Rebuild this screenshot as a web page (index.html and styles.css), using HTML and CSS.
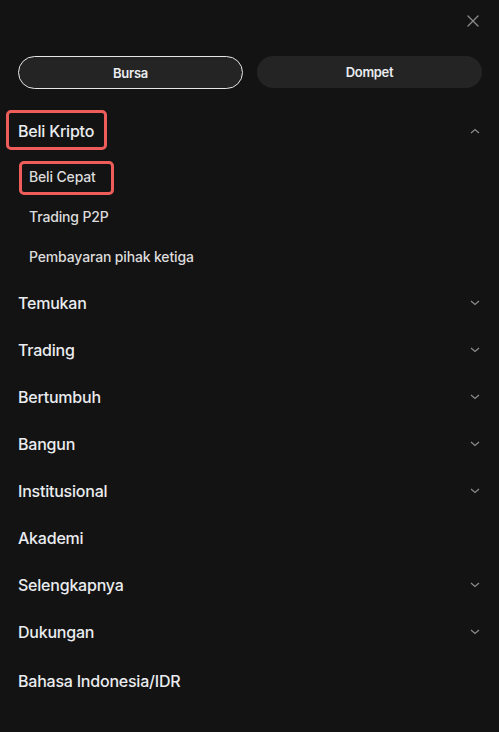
FILE: index.html
```html
<!DOCTYPE html>
<html lang="id">
<head>
<meta charset="utf-8">
<title>Menu</title>
<link rel="stylesheet" href="styles.css">
</head>
<body>
<div class="drawer">
  <div class="top">
    <button class="close" aria-label="Tutup">
      <svg width="16" height="16" viewBox="0 0 16 16"><path d="M3 3L13 13M13 3L3 13" stroke="#8c8c8c" stroke-width="1.3" fill="none" stroke-linecap="round"/></svg>
    </button>
  </div>
  <div class="tabs">
    <div class="tab tab-active">Bursa</div>
    <div class="tab">Dompet</div>
  </div>
  <nav class="menu">
    <div class="item">
      <span class="label mark mark-main">Beli Kripto</span>
      <svg class="chev" width="10" height="6" viewBox="0 0 10 6"><path d="M1 5L5 1.5L9 5" stroke="#8c8c8c" stroke-width="1.2" fill="none"/></svg>
    </div>
    <div class="submenu">
      <div class="subitem"><span class="label mark mark-sub">Beli Cepat</span></div>
      <div class="subitem"><span class="label">Trading P2P</span></div>
      <div class="subitem"><span class="label">Pembayaran pihak ketiga</span></div>
    </div>
    <div class="item"><span class="label">Temukan</span><svg class="chev" width="10" height="6" viewBox="0 0 10 6"><path d="M1 1L5 4.5L9 1" stroke="#8c8c8c" stroke-width="1.2" fill="none"/></svg></div>
    <div class="item"><span class="label">Trading</span><svg class="chev" width="10" height="6" viewBox="0 0 10 6"><path d="M1 1L5 4.5L9 1" stroke="#8c8c8c" stroke-width="1.2" fill="none"/></svg></div>
    <div class="item"><span class="label">Bertumbuh</span><svg class="chev" width="10" height="6" viewBox="0 0 10 6"><path d="M1 1L5 4.5L9 1" stroke="#8c8c8c" stroke-width="1.2" fill="none"/></svg></div>
    <div class="item"><span class="label">Bangun</span><svg class="chev" width="10" height="6" viewBox="0 0 10 6"><path d="M1 1L5 4.5L9 1" stroke="#8c8c8c" stroke-width="1.2" fill="none"/></svg></div>
    <div class="item"><span class="label">Institusional</span><svg class="chev" width="10" height="6" viewBox="0 0 10 6"><path d="M1 1L5 4.5L9 1" stroke="#8c8c8c" stroke-width="1.2" fill="none"/></svg></div>
    <div class="item"><span class="label">Akademi</span></div>
    <div class="item"><span class="label">Selengkapnya</span><svg class="chev" width="10" height="6" viewBox="0 0 10 6"><path d="M1 1L5 4.5L9 1" stroke="#8c8c8c" stroke-width="1.2" fill="none"/></svg></div>
    <div class="item"><span class="label">Dukungan</span><svg class="chev" width="10" height="6" viewBox="0 0 10 6"><path d="M1 1L5 4.5L9 1" stroke="#8c8c8c" stroke-width="1.2" fill="none"/></svg></div>
    <div class="item item-lang"><span class="label">Bahasa Indonesia/IDR</span></div>
  </nav>
</div>
</body>
</html>
```

FILE: styles.css
```css
* { box-sizing: border-box; }
html, body { margin: 0; padding: 0; }
body {
  background: #131313;
  color: #eaecef;
  font-family: Inter, "Noto Sans", Roboto, sans-serif;
  width: 499px;
  height: 732px;
  overflow: hidden;
}
.drawer {
  padding: 0 17px 0 18px;
}
.top {
  height: 41px;
  display: flex;
  justify-content: flex-end;
  align-items: center;
}
.close {
  width: 16px;
  height: 16px;
  padding: 0;
  margin-right: 1px;
  border: 0;
  background: none;
  display: flex;
}
.tabs {
  margin-top: 15px;
  display: grid;
  grid-template-columns: 1fr 1fr;
  column-gap: 14px;
  align-items: start;
}
.tab {
  height: 32px;
  border-radius: 17px;
  background: #242424;
  color: #eaecef;
  font-size: 13px;
  font-weight: 600;
  letter-spacing: -0.3px;
  display: flex;
  align-items: center;
  justify-content: center;
}
.tab-active {
  height: 33px;
  border: 1px solid #e6e6e6;
  padding-top: 1px;
}
.menu {
  margin-top: 18px;
}
.item {
  height: 47px;
  display: flex;
  align-items: center;
  justify-content: space-between;
  font-size: 16px;
  font-weight: 500;
  letter-spacing: -0.22px;
  line-height: 20px;
}
.chev {
  margin-right: 2px;
}
.item-lang {
  margin-top: 2px;
}
.submenu {
  padding: 3px 0 2px 11px;
}
.subitem {
  height: 40px;
  display: flex;
  align-items: center;
  font-size: 14px;
  font-weight: 500;
  letter-spacing: -0.15px;
  line-height: 20px;
  color: #dcdcdc;
}
.label {
  position: relative;
}
.mark::after {
  content: "";
  position: absolute;
  border: 3px solid #ee5d5a;
  border-radius: 5px;
}
.mark-main::after {
  top: -11px;
  bottom: -9px;
  left: -12px;
  right: -13px;
}
.mark-sub::after {
  top: -6px;
  bottom: -8px;
  left: -10px;
  right: -18px;
}
```
